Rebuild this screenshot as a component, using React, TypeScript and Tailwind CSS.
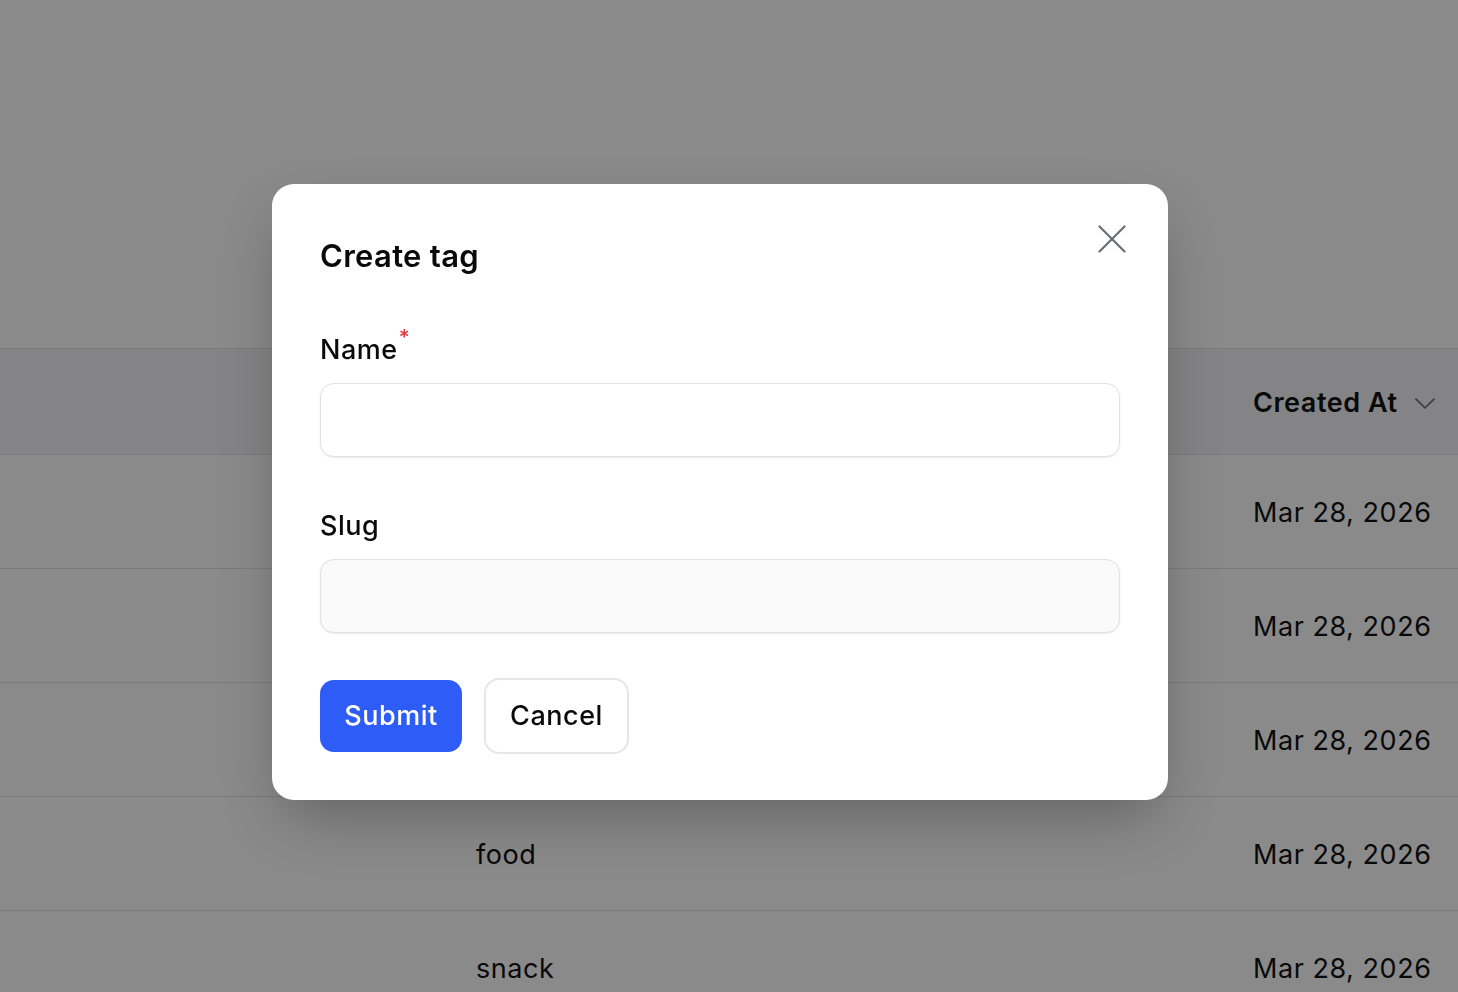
const rows = [
  { name: 'drink', createdAt: 'Mar 28, 2026' },
  { name: 'fruit', createdAt: 'Mar 28, 2026' },
  { name: 'dessert', createdAt: 'Mar 28, 2026' },
  { name: 'food', createdAt: 'Mar 28, 2026' },
  { name: 'snack', createdAt: 'Mar 28, 2026' },
];

function TagsTable() {
  return (
    <div className="pt-[348px] text-[27px] tracking-[0.02em] text-[#0a0a0a]">
      {/* Header */}
      <div className="flex h-[107px] items-center border-y border-[#e1e1e4] bg-[#f4f4f5] pt-[3px] font-semibold">
        <div className="flex-1 pl-[476px]">Name</div>
        <div className="flex w-[205px] items-center gap-[17px]">
          <span>Created At</span>
          <svg width="20" height="11" viewBox="0 0 20 11" fill="none" stroke="#71717a" strokeWidth="1.8" strokeLinecap="round" strokeLinejoin="round">
            <path d="M1 1.2 10 9.8 19 1.2" />
          </svg>
        </div>
      </div>

      {/* Rows */}
      {rows.map((row) => (
        <div key={row.name} className="flex h-[114px] items-center border-b border-[#e1e1e4] pt-[3px]">
          <div className="flex-1 pl-[476px]">{row.name}</div>
          <div className="w-[205px]">{row.createdAt}</div>
        </div>
      ))}
    </div>
  );
}

function CreateTagModal() {
  return (
    <div className="fixed inset-0 z-50 flex items-center justify-center bg-[rgba(9,9,11,0.475)] pb-[8px] pr-[18px]">
      <div className="relative w-[896px] rounded-[22px] bg-white px-12 pb-[46px] pt-[54px] shadow-[0_25px_60px_-12px_rgba(0,0,0,0.3)]">
        {/* Close */}
        <button className="absolute right-[42px] top-[41px] flex h-[28px] w-[28px] items-center justify-center text-[#6b6b75]">
          <svg width="28" height="28" viewBox="0 0 28 28" fill="none" stroke="currentColor" strokeWidth="2.2" strokeLinecap="round">
            <path d="M1.5 1.5 26.5 26.5" />
            <path d="M26.5 1.5 1.5 26.5" />
          </svg>
        </button>

        <h2 className="text-[31px] font-semibold leading-[35px] tracking-[0.01em] text-[#0a0a0a]">Create tag</h2>

        {/* Name */}
        <div className="mt-[61px]">
          <label className="block h-[31px] text-[27px] font-medium leading-[31px] tracking-[0.02em] text-[#0a0a0a]">
            Name
            <span className="relative -top-[7px] ml-[1px] inline-block h-[10px] align-top text-[21px] leading-none text-[#e5363d]">*</span>
          </label>
          <input
            className="mt-[18px] block h-[74px] w-full rounded-[14px] border-[1.5px] border-[#e2e2e4] bg-white px-5 text-[27px] shadow-[0_1px_2px_rgba(0,0,0,0.08)] outline-none"
          />
        </div>

        {/* Slug */}
        <div className="mt-[53px]">
          <label className="block h-[31px] text-[27px] font-medium leading-[31px] tracking-[0.02em] text-[#0a0a0a]">Slug</label>
          <input
            className="mt-[18px] block h-[74px] w-full rounded-[14px] border-[1.5px] border-[#e2e2e4] bg-[#fafafa] px-5 text-[27px] shadow-[0_1px_2px_rgba(0,0,0,0.08)] outline-none"
          />
        </div>

        {/* Actions */}
        <div className="mt-[45px] flex items-center gap-[22px] text-[27px] font-medium tracking-[0.02em]">
          <button className="h-[72px] w-[142px] rounded-[14px] bg-[#2e5cf6] text-white">Submit</button>
          <button className="h-[76px] w-[145px] rounded-[15px] border-2 border-[#e6e6e8] bg-white text-[#0a0a0a]">
            Cancel
          </button>
        </div>
      </div>
    </div>
  );
}

export default function App() {
  return (
    <div className="min-h-screen bg-white font-['Inter',sans-serif]">
      <TagsTable />
      <CreateTagModal />
    </div>
  );
}
